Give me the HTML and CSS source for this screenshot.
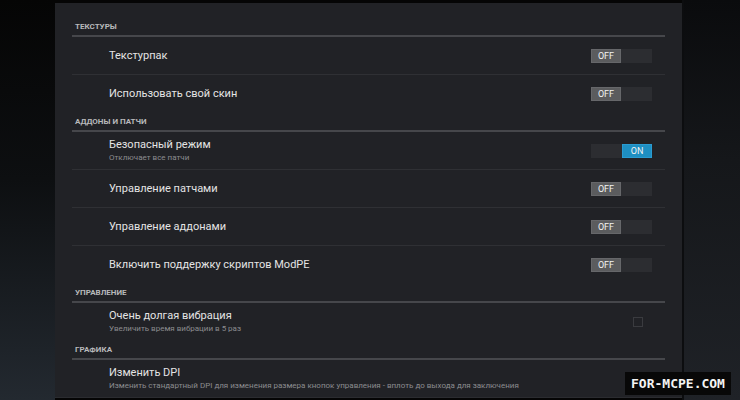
FILE: index.html
```html
<!DOCTYPE html>
<html lang="ru">
<head>
    <meta charset="UTF-8">
    <title>Настройки</title>
    <link rel="stylesheet" href="styles.css">
</head>
<body>
    <div class="screen">
        <div class="side-left"></div>
        <!-- панель настроек -->
        <div class="panel">
            <div class="list">
                <div class="group-title">Текстуры</div>
                <div class="row">
                    <div class="text"><div class="title">Текстурпак</div></div>
                    <div class="switch"><span class="thumb">OFF</span></div>
                </div>
                <div class="row last">
                    <div class="text"><div class="title">Использовать свой скин</div></div>
                    <div class="switch"><span class="thumb">OFF</span></div>
                </div>

                <div class="group-title">Аддоны и патчи</div>
                <div class="row">
                    <div class="text">
                        <div class="title">Безопасный режим</div>
                        <div class="sub">Отключает все патчи</div>
                    </div>
                    <div class="switch on"><span class="thumb">ON</span></div>
                </div>
                <div class="row">
                    <div class="text"><div class="title">Управление патчами</div></div>
                    <div class="switch"><span class="thumb">OFF</span></div>
                </div>
                <div class="row">
                    <div class="text"><div class="title">Управление аддонами</div></div>
                    <div class="switch"><span class="thumb">OFF</span></div>
                </div>
                <div class="row last">
                    <div class="text"><div class="title">Включить поддержку скриптов ModPE</div></div>
                    <div class="switch"><span class="thumb">OFF</span></div>
                </div>

                <div class="group-title">Управление</div>
                <div class="row last">
                    <div class="text">
                        <div class="title">Очень долгая вибрация</div>
                        <div class="sub">Увеличить время вибрации в 5 раз</div>
                    </div>
                    <div class="check"></div>
                </div>

                <div class="group-title">Графика</div>
                <div class="row last">
                    <div class="text">
                        <div class="title">Изменить DPI</div>
                        <div class="sub">Изменить стандартный DPI для изменения размера кнопок управления - вплоть до выхода для заключения</div>
                    </div>
                </div>
            </div>
        </div>
        <div class="side-right"></div>
        <div class="watermark">FOR-MCPE.COM</div>
    </div>
</body>
</html>
```

FILE: styles.css
```css
*{
    margin: 0;
    padding: 0;
    box-sizing: border-box;
}
body{
    background-color: #050505;
    font-family: Roboto, "Liberation Sans", sans-serif;
}
.screen{
    width: 740px;
    height: 400px;
    display: flex;
    position: relative;
    overflow: hidden;
}
.side-left{
    width: 55px;
    background: linear-gradient(to bottom, #050505 0%, #0d0f11 45%, #232930 100%);
}
.side-right{
    width: 58px;
    border-left: 2px solid #0c0d0f;
    background: linear-gradient(to bottom, #0a0b0d 0%, #15171a 40%, #1f2227 100%);
}
/* 设置面板 */
.panel{
    width: 627px;
    height: 395px;
    margin-top: 3px;
    background-color: #212226;
    border-bottom: 1px solid #2b2c30;
}
.list{
    margin: 0 17px;
    padding-top: 14px;
}
.group-title{
    height: 20px;
    padding: 0 3px;
    line-height: 19px;
    font-size: 8px;
    font-weight: 700;
    text-transform: uppercase;
    color: #b8b9bb;
    border-bottom: 2px solid #46474b;
}
.row{
    height: 38px;
    display: flex;
    align-items: center;
    padding: 0 13px 0 37px;
    border-bottom: 1px solid #2f3034;
}
.row.last{
    border-bottom: none;
    height: 37px;
}
.text{
    flex: 1;
    min-width: 0;
}
.title{
    font-size: 11px;
    color: #e4e4e4;
    line-height: 13px;
    white-space: nowrap;
}
.sub{
    font-size: 8px;
    color: #8b8c8f;
    line-height: 11px;
    margin-top: 1px;
    white-space: nowrap;
}
.switch{
    width: 61px;
    height: 14px;
    background-color: #2c2d31;
    display: flex;
}
.switch .thumb{
    width: 30px;
    height: 14px;
    background-color: #5b5c5e;
    color: #f2f2f2;
    font-size: 9px;
    line-height: 14px;
    text-align: center;
    box-shadow: inset 0 0 0 1px #66676a;
}
.switch.on{
    justify-content: flex-end;
}
.switch.on .thumb{
    background-color: #1e8fc2;
    box-shadow: inset 0 0 0 1px #2a9bd0;
}
.check{
    width: 10px;
    height: 10px;
    border: 1.5px solid #3a3b3f;
    margin-right: 9px;
}
.watermark{
    position: absolute;
    left: 625px;
    top: 372px;
    width: 106px;
    height: 23px;
    background-color: #080808;
    color: #f4f4f4;
    font-family: "DejaVu Sans Mono", monospace;
    font-weight: 700;
    font-size: 13px;
    line-height: 23px;
    text-align: center;
}
```
